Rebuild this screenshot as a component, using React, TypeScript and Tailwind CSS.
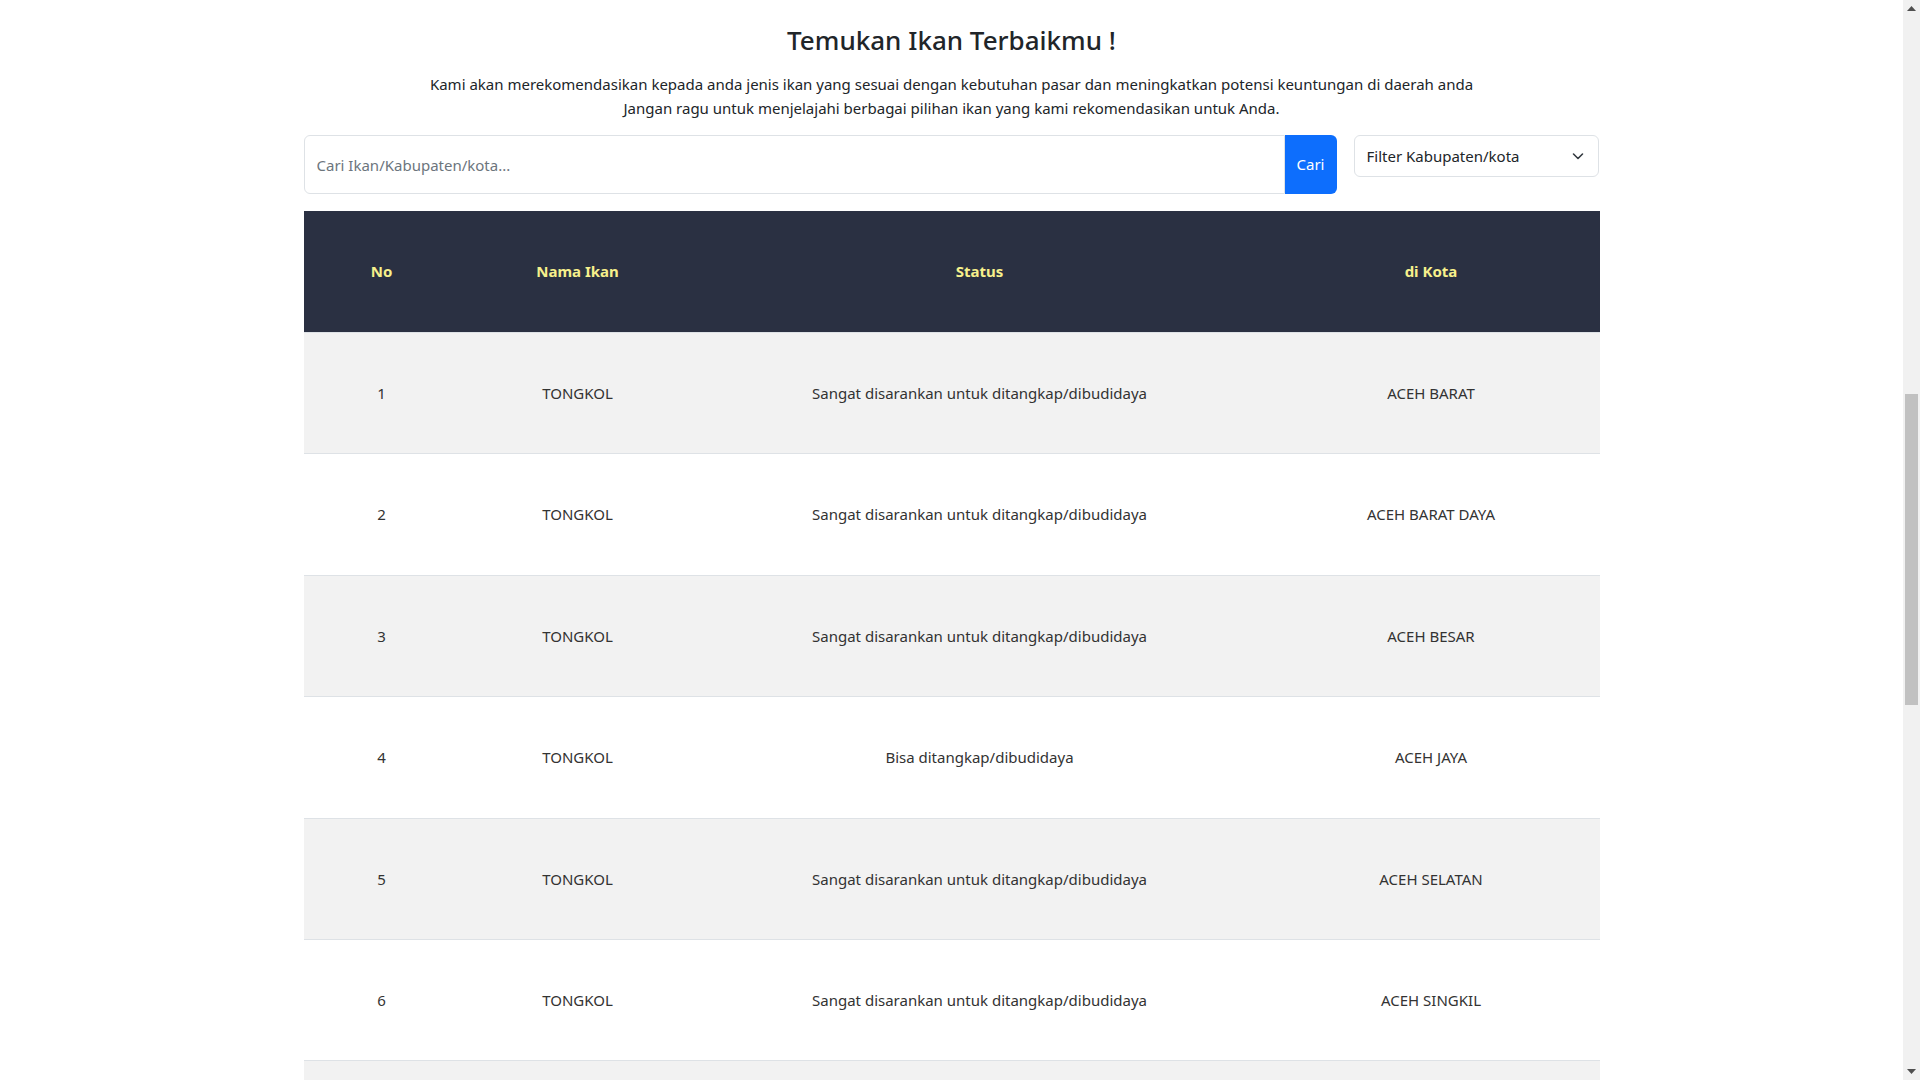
import { useState } from "react";

const rows = [
  { no: 1, ikan: "TONGKOL", status: "Sangat disarankan untuk ditangkap/dibudidaya", kota: "ACEH BARAT" },
  { no: 2, ikan: "TONGKOL", status: "Sangat disarankan untuk ditangkap/dibudidaya", kota: "ACEH BARAT DAYA" },
  { no: 3, ikan: "TONGKOL", status: "Sangat disarankan untuk ditangkap/dibudidaya", kota: "ACEH BESAR" },
  { no: 4, ikan: "TONGKOL", status: "Bisa ditangkap/dibudidaya", kota: "ACEH JAYA" },
  { no: 5, ikan: "TONGKOL", status: "Sangat disarankan untuk ditangkap/dibudidaya", kota: "ACEH SELATAN" },
  { no: 6, ikan: "TONGKOL", status: "Sangat disarankan untuk ditangkap/dibudidaya", kota: "ACEH SINGKIL" },
];

const cols = "grid grid-cols-[156px_236px_568px_335px]";

export default function App() {
  const [query, setQuery] = useState("");

  return (
    <div className="flex h-screen w-full overflow-hidden bg-white font-['Noto_Sans',sans-serif] text-[#212529]">
      <main className="flex-1 overflow-hidden">
        <div className="mx-auto w-[1296px] pt-[23px]">
          <h3 className="text-center text-[26px] font-medium leading-[34px] text-[#212529]">
            Temukan Ikan Terbaikmu !
          </h3>
          <p className="mt-[15px] text-center text-[15px] leading-6 text-[#212529]">
            Kami akan merekomendasikan kepada anda jenis ikan yang sesuai dengan kebutuhan pasar dan meningkatkan potensi keuntungan di daerah anda
            <br />
            Jangan ragu untuk menjelajahi berbagai pilihan ikan yang kami rekomendasikan untuk Anda.
          </p>

          <div className="mt-[15px] flex items-start gap-[17px]">
            <div className="flex h-[59px] w-[1033px]">
              <input
                value={query}
                onChange={(e) => setQuery(e.target.value)}
                placeholder="Cari Ikan/Kabupaten/kota..."
                className="h-full flex-1 rounded-l-md border border-[#dee2e6] px-3 text-[15px] text-[#212529] outline-none placeholder:text-[#6c757d]"
              />
              <button className="h-full w-[52px] rounded-r-md bg-[#0d6efd] text-[15px] text-white">
                Cari
              </button>
            </div>
            <div className="flex h-[42px] w-[245px] items-center justify-between rounded-md border border-[#dee2e6] pl-3 pr-3 text-[15px] text-[#212529]">
              <span>Filter Kabupaten/kota</span>
              <svg className="h-4 w-4" viewBox="0 0 16 16" fill="none">
                <path d="M3.5 6l4.5 4.5L12.5 6" stroke="#343a40" strokeWidth={1.6} strokeLinecap="round" strokeLinejoin="round" />
              </svg>
            </div>
          </div>

          <div className="mt-[17px]">
            <div className={`${cols} h-[122px] items-center border-b border-[#dee2e6] bg-[#2a3042] text-center text-[15px] font-bold text-[#f7f08c]`}>
              <div>No</div>
              <div>Nama Ikan</div>
              <div>Status</div>
              <div>di Kota</div>
            </div>
            {rows.map((r, i) => (
              <div
                key={r.no}
                className={`${cols} h-[121.4px] items-center border-b border-[#dee2e6] text-center text-[15px] text-[#333333] ${i % 2 === 0 ? "bg-[#f2f2f2]" : "bg-white"}`}
              >
                <div>{r.no}</div>
                <div>{r.ikan}</div>
                <div>{r.status}</div>
                <div>{r.kota}</div>
              </div>
            ))}
            <div className="h-[121px] bg-[#f2f2f2]" />
          </div>
        </div>
      </main>

      <div className="flex w-[17px] flex-col items-center bg-[#f1f1f1]">
        <div className="flex h-[17px] items-center justify-center">
          <svg width="9" height="5" viewBox="0 0 9 5">
            <path d="M0 5L4.5 0L9 5Z" fill="#505050" />
          </svg>
        </div>
        <div className="mt-[377px] h-[311px] w-[13px] bg-[#c1c1c1]" />
        <div className="flex-1" />
        <div className="flex h-[17px] items-center justify-center">
          <svg width="9" height="5" viewBox="0 0 9 5">
            <path d="M0 0L9 0L4.5 5Z" fill="#505050" />
          </svg>
        </div>
      </div>
    </div>
  );
}
